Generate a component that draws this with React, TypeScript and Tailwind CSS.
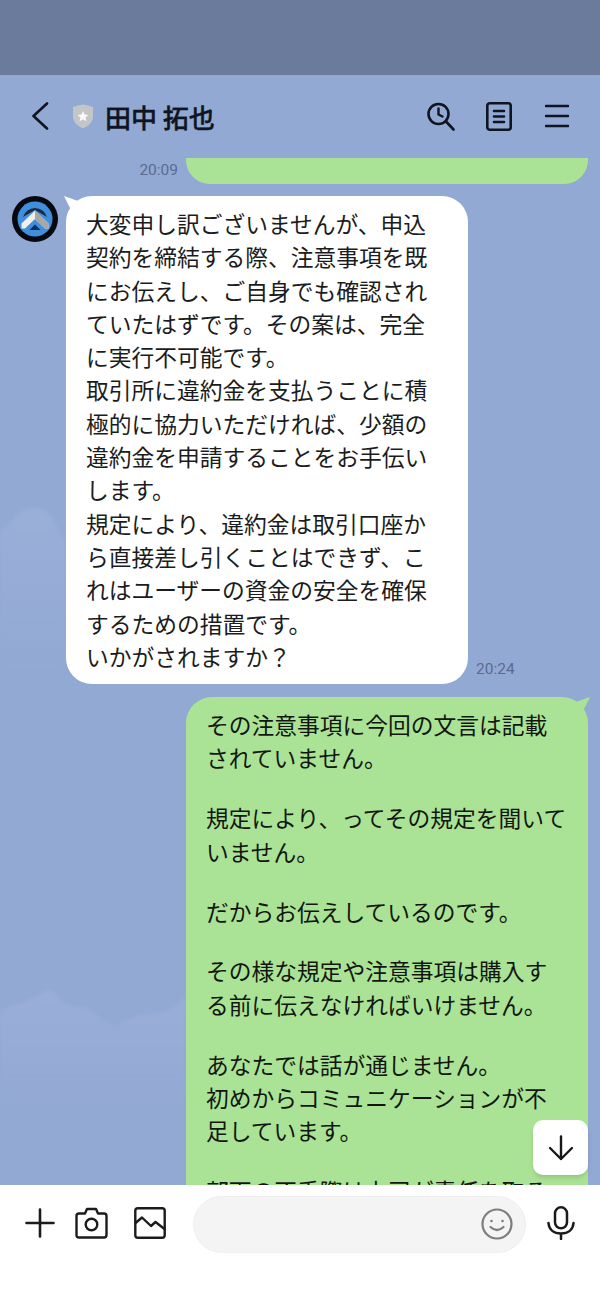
import React from "react";

const jp = "font-['Noto_Sans_CJK_JP','Noto_Sans',sans-serif]";

function Avatar() {
  return (
    <svg width="46" height="46" viewBox="0 0 46 46" className="shrink-0">
      <circle cx="23" cy="23" r="23" fill="#07090e" />
      <circle cx="23" cy="23" r="17.5" fill="#3f8fdc" />
      <path d="M11 21 A12.5 12.5 0 0 1 35 21 L23 14 Z" fill="#1c2c44" />
      <path d="M9.5 27.5 L23 14.5 L36.5 27.5 L36.5 32.5 L33 32.5 L23 23 L13 32.5 L9.5 32.5 Z" fill="#f1efe9" />
      <path d="M23 14.5 L36.5 27.5 L36.5 32.5 L33 32.5 L23 23 Z" fill="#a8a7a2" />
      <path d="M23 28.5 L28.5 34 L17.5 34 Z" fill="#10305c" />
    </svg>
  );
}

const Bubble = ({ lines }: { lines: string[] }) => (
  <>
    {lines.map((l) => (
      <div key={l} className="whitespace-nowrap">
        {l}
      </div>
    ))}
  </>
);

const whiteLines = [
  "大変申し訳ございませんが、申込",
  "契約を締結する際、注意事項を既",
  "にお伝えし、ご自身でも確認され",
  "ていたはずです。その案は、完全",
  "に実行不可能です。",
  "取引所に違約金を支払うことに積",
  "極的に協力いただければ、少額の",
  "違約金を申請することをお手伝い",
  "します。",
  "規定により、違約金は取引口座か",
  "ら直接差し引くことはできず、こ",
  "れはユーザーの資金の安全を確保",
  "するための措置です。",
  "いかがされますか？",
];

const greenParas = [
  ["その注意事項に今回の文言は記載", "されていません。"],
  ["規定により、ってその規定を聞いて", "いません。"],
  ["だからお伝えしているのです。"],
  ["その様な規定や注意事項は購入す", "る前に伝えなければいけません。"],
  ["あなたでは話が通じません。", "初めからコミュニケーションが不", "足しています。"],
  ["部下の不手際は上司が責任を取る"],
];

export default function App() {
  return (
    <div className={`flex h-[1300px] w-[600px] flex-col overflow-hidden bg-white ${jp}`}>
      <div className="h-[75px] shrink-0 bg-[#6a7b9c]" />
      <header className="flex h-[83px] shrink-0 items-center bg-[#92a9d4] pb-[1px]">
        <svg width="18" height="28" viewBox="0 0 18 28" fill="none" className="ml-[31px]">
          <path d="M16 1.5 L2.5 14 L16 26.5" stroke="#10141f" strokeWidth="2.6" strokeLinecap="round" strokeLinejoin="round" />
        </svg>
        <svg width="22" height="25" viewBox="0 0 22 25" className="ml-[23px]">
          <path d="M1 3 Q6 1 11 0.5 Q16 1 21 3 L21 13 Q21 20 11 24.5 Q1 20 1 13 Z" fill="#c4c5c6" />
          <path d="M11 7 L12.6 10.6 L16.4 11 L13.5 13.5 L14.4 17.3 L11 15.3 L7.6 17.3 L8.5 13.5 L5.6 11 L9.4 10.6 Z" fill="#fbfbfb" />
        </svg>
        <div className="ml-[11px] mt-[2px] whitespace-nowrap text-[26px] font-medium leading-none text-[#0f1420] [-webkit-text-stroke:0.4px_#0f1420]">田中 拓也</div>
        <div className="ml-auto flex items-center">
          <svg width="28" height="29" viewBox="0 0 28 29" fill="none" stroke="#10141f" strokeLinecap="round" strokeLinejoin="round">
            <circle cx="11.5" cy="12" r="10" strokeWidth="2.6" />
            <path d="M11.5 6.5 V12.5 L15.5 14.5" strokeWidth="2.4" />
            <path d="M19 19.5 L26.5 27.5" strokeWidth="2.6" />
          </svg>
          <svg width="26" height="29" viewBox="0 0 26 29" fill="none" stroke="#10141f" strokeLinecap="round" className="ml-[31px]">
            <rect x="1.3" y="1.3" width="23.4" height="26.4" rx="2.5" strokeWidth="2.6" />
            <path d="M8 9 H18 M8 14.5 H18 M8 20 H18" strokeWidth="2.6" />
          </svg>
          <svg width="24" height="24" viewBox="0 0 24 24" fill="none" stroke="#10141f" strokeLinecap="round" className="ml-[33px] mr-[31px]">
            <path d="M1 2 H23 M1 12 H23 M1 22 H23" strokeWidth="2.6" />
          </svg>
        </div>
      </header>

      <main className="relative flex-1 overflow-hidden bg-[#92a9d4]">
        <svg width="190" height="1027" viewBox="0 0 190 1027" className="absolute left-0 top-0 blur-[2px]">
          <defs>
            <linearGradient id="c1" x1="0" y1="0" x2="0" y2="1">
              <stop offset="0" stopColor="#a3b6dc" stopOpacity="0.5" />
              <stop offset="1" stopColor="#a3b6dc" stopOpacity="0" />
            </linearGradient>
            <linearGradient id="c2" x1="0" y1="0" x2="0" y2="1">
              <stop offset="0" stopColor="#a2b4db" stopOpacity="0.55" />
              <stop offset="1" stopColor="#a2b4db" stopOpacity="0" />
            </linearGradient>
          </defs>
          <path d="M0 372 Q8 368 14 360 Q28 345 44 352 Q52 356 58 372 L66 384 L66 520 L0 520 Z" fill="url(#c1)" />
          <path d="M0 852 Q20 846 38 838 Q48 828 56 836 Q62 846 72 848 Q84 850 90 850 Q100 864 118 868 Q128 860 140 856 Q160 856 172 850 L186 838 L186 960 L0 960 Z" fill="url(#c2)" />
        </svg>

        <div className="relative flex flex-col">
          <div className="flex items-center justify-end pr-[12px]">
            <span className="mr-[8px] font-['Roboto',sans-serif] text-[15.5px] leading-none text-[#5b6b8e]">20:09</span>
            <div className="h-[26px] w-[402px] rounded-b-[24px] bg-[#aae396]" />
          </div>

          <div className="mt-[12px] flex items-end pl-[12px]">
            <div className="flex items-start self-stretch">
              <Avatar />
            </div>
            <div className="relative ml-[8px] w-[402px] rounded-[26px] bg-white py-[11px] pl-[20px] pr-[20px] text-[22.75px] leading-[33.3px] text-[#1b1c20]">
              <svg width="14" height="12" viewBox="0 0 14 12" className="absolute -left-[2px] top-0">
                <path d="M0 0 L14 5 L6 12 Z" fill="#fff" />
              </svg>
              <Bubble lines={whiteLines} />
            </div>
            <span className="mb-[7px] ml-[8px] font-['Roboto',sans-serif] text-[15.5px] leading-none text-[#5b6b8e]">20:24</span>
          </div>

          <div className="relative ml-[186px] mt-[13px] w-[402px] rounded-[26px] bg-[#aae396] py-[11px] pl-[20px] pr-[20px] text-[22.75px] leading-[33.3px] text-[#12160f]">
            <svg width="14" height="12" viewBox="0 0 14 12" className="absolute -right-[2px] top-0">
              <path d="M14 0 L0 5 L8 12 Z" fill="#aae396" />
            </svg>
            {greenParas.map((p, i) => (
              <div key={p[0]} className={i ? "mt-[26.6px]" : ""}>
                <Bubble lines={p} />
              </div>
            ))}
            <div className="h-[120px]" />
          </div>
        </div>

        <button className="absolute bottom-[10px] right-[12px] flex h-[55px] w-[55px] items-center justify-center rounded-[10px] bg-white shadow-md">
          <svg width="26" height="26" viewBox="0 0 26 26" fill="none" stroke="#17181c" strokeWidth="2.4" strokeLinecap="round" strokeLinejoin="round">
            <path d="M13 1.5 V24 M2 13 L13 24 L24 13" />
          </svg>
        </button>
      </main>

      <footer className="h-[115px] shrink-0 bg-white">
        <div className="mt-[11px] flex h-[57px] items-center pl-[25px]">
          <div className="mb-[3px] flex items-center">
            <svg width="30" height="30" viewBox="0 0 30 30" fill="none" stroke="#1b1b1d" strokeWidth="2.6" strokeLinecap="round">
              <path d="M15 1.5 V28.5 M1.5 15 H28.5" />
            </svg>
            <svg width="33" height="32" viewBox="0 0 33 32" fill="none" stroke="#1b1b1d" strokeWidth="2.4" strokeLinejoin="round" className="ml-[20px]">
              <path d="M4 6.5 H10 L12 2 H21 L23 6.5 H29 Q31.5 6.5 31.5 9 V28 Q31.5 30.5 29 30.5 H4 Q1.5 30.5 1.5 28 V9 Q1.5 6.5 4 6.5 Z" />
              <circle cx="16.5" cy="17.5" r="5.8" />
            </svg>
            <svg width="32" height="32" viewBox="0 0 32 32" fill="none" stroke="#1b1b1d" strokeWidth="2.4" strokeLinejoin="round" strokeLinecap="round" className="ml-[26px]">
              <rect x="1.3" y="1.3" width="29.4" height="29.4" rx="2.5" />
              <path d="M1.5 16 L8 10.5 L17 19 L21.5 15 L30.5 22" />
            </svg>
          </div>
          <div className="ml-[27px] flex h-[57px] w-[333px] items-center justify-end rounded-full border border-[#efefef] bg-[#f4f4f4] pr-[12px]">
            <svg width="32" height="32" viewBox="0 0 32 32" fill="none" stroke="#7e7e7e" strokeWidth="2.2" strokeLinecap="round" className="mb-[1px]">
              <circle cx="16" cy="16" r="14.5" />
              <circle cx="10.5" cy="13" r="1.3" fill="#7e7e7e" stroke="none" />
              <circle cx="21.5" cy="13" r="1.3" fill="#7e7e7e" stroke="none" />
              <path d="M9.5 19 Q16 25 22.5 19" />
            </svg>
          </div>
          <svg width="28" height="34" viewBox="0 0 28 34" fill="none" stroke="#1b1b1d" strokeWidth="2.5" strokeLinecap="round" className="mb-[3px] ml-[21px]">
            <rect x="8" y="1.3" width="12" height="21" rx="6" />
            <path d="M1.5 17 C2 24 7 27.5 14 27.5 C21 27.5 26 24 26.5 17 M14 27.5 V33" />
          </svg>
        </div>
      </footer>
    </div>
  );
}
